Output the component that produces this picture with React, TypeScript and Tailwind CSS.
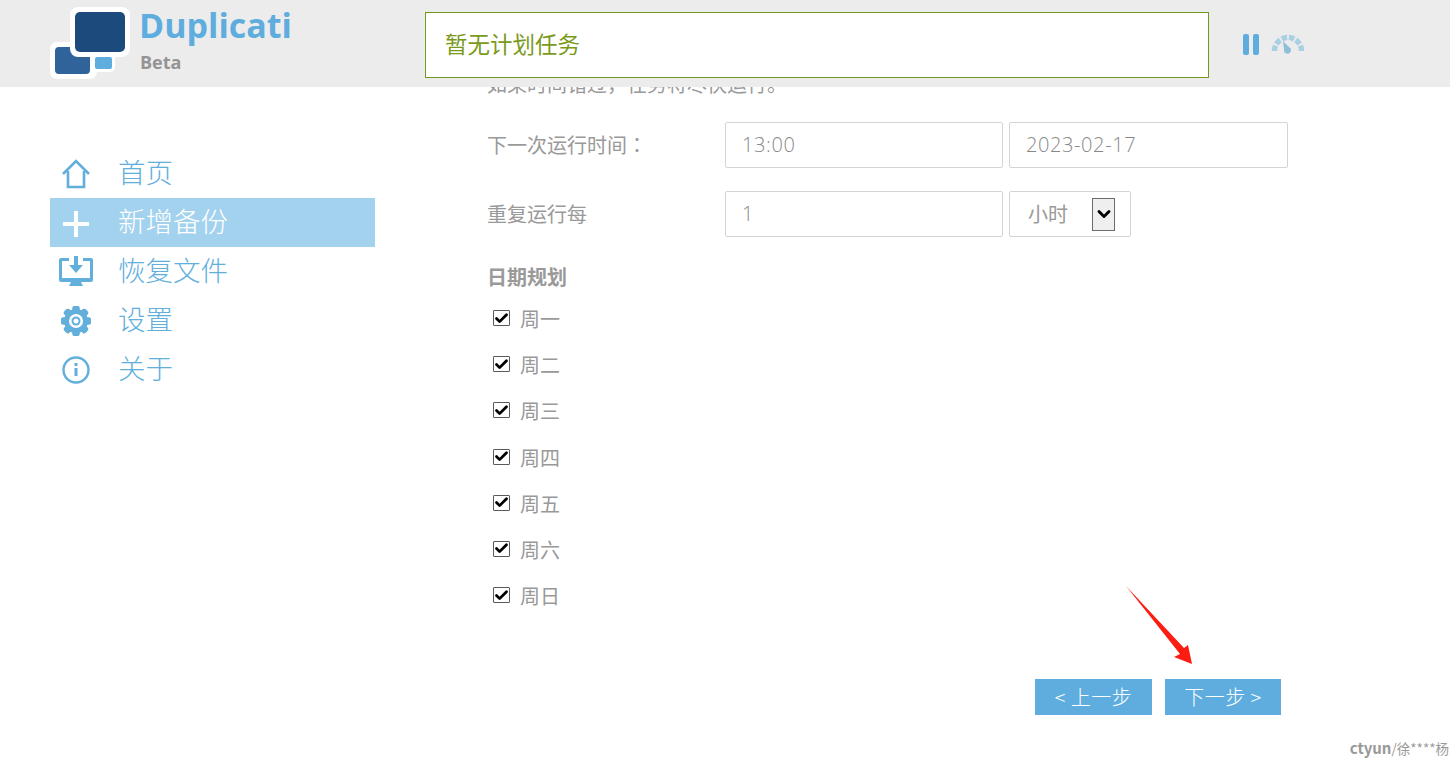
import { Check, ChevronDown } from "lucide-react";
import type { ReactNode } from "react";

const CJK = "font-['Noto_Sans_CJK_SC','Liberation_Sans',sans-serif]";

function Logo() {
  return (
    <svg width="82" height="73" viewBox="0 0 82 73" className="shrink-0">
      <rect x="0" y="35" width="47" height="37" rx="7" fill="#fff" />
      <rect x="35" y="44" width="30" height="21" rx="5" fill="#fff" />
      <rect x="5" y="40" width="35" height="27" rx="4" fill="#2f6399" />
      <rect x="45" y="50" width="17" height="12" rx="2" fill="#5fadde" />
      <rect x="20" y="0" width="60" height="50" rx="8" fill="#fff" />
      <rect x="25" y="5" width="50" height="40" rx="5" fill="#1d4a7c" />
    </svg>
  );
}

function PauseIcon() {
  return (
    <div className="flex gap-[4px]">
      <span className="h-[21px] w-[6px] rounded-[2px] bg-[#5fadde]" />
      <span className="h-[21px] w-[6px] rounded-[2px] bg-[#5fadde]" />
    </div>
  );
}

function Gauge() {
  return (
    <svg width="34" height="20" viewBox="0 0 34 20" fill="none">
      <path
        d="M3.500 17 A13.500 13.500 0 0 1 30.500 17"
        stroke="#abd0e3"
        strokeWidth="5.500"
        pathLength="100"
        strokeDasharray="13 4.400"
      />
      <path d="M12 7l6 6a3.500 3.500 0 1 1-5 2.500z" fill="#8fbfd8" />
    </svg>
  );
}

const HomeIcon = () => (
  <svg width="30" height="30" viewBox="0 0 30 30" fill="none" stroke="#62afdc" strokeWidth="2.600">
    <path d="M2 15 15 2l13 13" />
    <path d="M7 12v16h16V12" />
  </svg>
);

const PlusIcon = () => (
  <svg width="30" height="30" viewBox="0 0 30 30" stroke="#fff" strokeWidth="4">
    <path d="M2 16h26M15 3v26" />
  </svg>
);

const RestoreIcon = () => (
  <svg width="36" height="32" viewBox="0 0 36 32" fill="#62afdc">
    <path d="M3 2h8v3H4v17h28V5h-7V2h8a2 2 0 0 1 2 2v20a2 2 0 0 1-2 2H3a2 2 0 0 1-2-2V4a2 2 0 0 1 2-2z" />
    <path d="M16 0h4v9h5l-7 8-7-8h5z" />
    <path d="M13 26h10l2 4H11z" />
  </svg>
);

const GearIcon = () => (
  <svg width="32" height="32" viewBox="0 0 32 32">
    <g fill="#62afdc">
      {[0, 45, 90, 135, 180, 225, 270, 315].map((a) => (
        <rect key={a} x="12.500" y="1" width="7" height="30" rx="2" transform={`rotate(${a} 16 16)`} />
      ))}
      <circle cx="16" cy="16" r="12" />
    </g>
    <circle cx="16" cy="16" r="7" fill="#fff" />
    <circle cx="16" cy="16" r="4.500" fill="#62afdc" />
    <circle cx="16" cy="16" r="2.500" fill="#fff" />
  </svg>
);

const InfoIcon = () => (
  <svg width="30" height="30" viewBox="0 0 30 30" fill="none" stroke="#62afdc" strokeWidth="2.400">
    <circle cx="15" cy="15" r="12.500" />
    <path d="M15 13v8" strokeWidth="3" />
    <path d="M15 8v3" strokeWidth="3" />
  </svg>
);

const NAV: { label: string; icon: ReactNode; active?: boolean }[] = [
  { label: "首页", icon: <HomeIcon /> },
  { label: "新增备份", icon: <PlusIcon />, active: true },
  { label: "恢复文件", icon: <RestoreIcon /> },
  { label: "设置", icon: <GearIcon /> },
  { label: "关于", icon: <InfoIcon /> },
];

const DAYS = ["周一", "周二", "周三", "周四", "周五", "周六", "周日"];

function TextBox({ value, className }: { value: string; className: string }) {
  return (
    <div
      className={`flex h-[46px] items-center rounded-[2px] border border-[#d4d4d4] pl-[16px] font-['Open_Sans',sans-serif] text-[20px] font-light tracking-[0.6px] text-[#888] ${className}`}
    >
      {value}
    </div>
  );
}

export default function App() {
  return (
    <div className={`relative h-[758px] w-[1450px] overflow-hidden bg-white ${CJK}`}>
      <header className="relative z-10 flex h-[87px] bg-[#ececec] pl-[50px]">
        <div className="pt-[7px]">
          <Logo />
        </div>
        <div className="ml-[7px] w-[286px] font-['Open_Sans',sans-serif] font-bold">
          <div className="mt-[2px] text-[34px] leading-[46px] text-[#5fadde]">Duplicati</div>
          <div className="ml-[1px] mt-[2px] text-[18px] leading-[24px] text-[#949494]">Beta</div>
        </div>
        <div className="mt-[12px] flex h-[66px] w-[784px] items-center border border-[#6f9a1f] bg-white pb-[3px] pl-[19px] text-[22.500px] text-[#7a9a1c]">
          暂无计划任务
        </div>
        <div className="ml-[34px] mt-[34px] flex items-start gap-[12px]">
          <PauseIcon />
          <Gauge />
        </div>
      </header>

      <div className="flex">
        <nav className="ml-[50px] mt-[62px] w-[325px] shrink-0">
          {NAV.map((item) => (
            <div
              key={item.label}
              className={`flex h-[49px] items-center text-[27.500px] font-light ${
                item.active ? "bg-[#a3d2ee] text-white" : "text-[#62afdc]"
              }`}
            >
              <span className="mr-[16px] flex w-[52px] justify-center">{item.icon}</span>
              <span className="pb-[3px]">{item.label}</span>
            </div>
          ))}
        </nav>

        <main className="ml-[112px] w-[801px] text-[20px] text-[#999]">
          <div className="-mt-[18px] h-[30px] leading-[30px]">如果时间错过，任务将尽快运行。</div>

          <div className="mt-[23px] flex h-[46px] items-center">
            <span className="w-[238px] shrink-0">
              下一次运行时间<span className="font-['Noto_Sans_CJK_TC',sans-serif]">：</span>
            </span>
            <TextBox value="13:00" className="w-[278px]" />
            <TextBox value="2023-02-17" className="ml-[6px] w-[279px]" />
          </div>

          <div className="mt-[23px] flex h-[46px] items-center">
            <span className="w-[238px] shrink-0">重复运行每</span>
            <TextBox value="1" className="w-[278px]" />
            <div className="ml-[6px] flex h-[46px] w-[122px] items-center rounded-[2px] border border-[#d4d4d4] pl-[18px]">
              小时
              <span className="ml-[24px] flex h-[33px] w-[23px] items-center justify-center border border-[#6b6b6b] bg-[#efefef]">
                <ChevronDown size={20} strokeWidth={3.500} color="#000" />
              </span>
            </div>
          </div>

          <div className="mt-[25px] h-[30px] font-bold leading-[30px]">日期规划</div>

          <div className="mt-[4px]">
            {DAYS.map((day) => (
              <label key={day} className="flex h-[46.170px] items-center pl-[6px]">
                <span className="mb-[2px] flex h-[16px] w-[17px] items-center justify-center rounded-[1px] border border-[#5a5a5a] bg-white">
                  <Check size={15} strokeWidth={4.500} color="#000" />
                </span>
                <span className="ml-[10px]">{day}</span>
              </label>
            ))}
          </div>

          <div className="mt-[60px] mr-[7px] flex justify-end gap-[13px] text-white">
            <button className="h-[36px] w-[117px] bg-[#5fadde] text-[20px] font-light tracking-[0.5px]">&lt; 上一步</button>
            <button className="h-[36px] w-[116px] bg-[#5fadde] text-[20px] font-light tracking-[0.5px]">下一步 &gt;</button>
          </div>
        </main>
      </div>

      <svg className="absolute left-[1120px] top-[580px]" width="80" height="90" viewBox="0 0 80 90">
        <path d="M6 6 64 68 68 65 72 84 54 77 60 74z" fill="#fb1d12" />
      </svg>

      <div className="absolute right-[1px] top-[739px] text-[13.500px] leading-[18px] text-[#999]">
        <span className="text-[15px] font-bold">ctyun</span>/徐****杨
      </div>
    </div>
  );
}
